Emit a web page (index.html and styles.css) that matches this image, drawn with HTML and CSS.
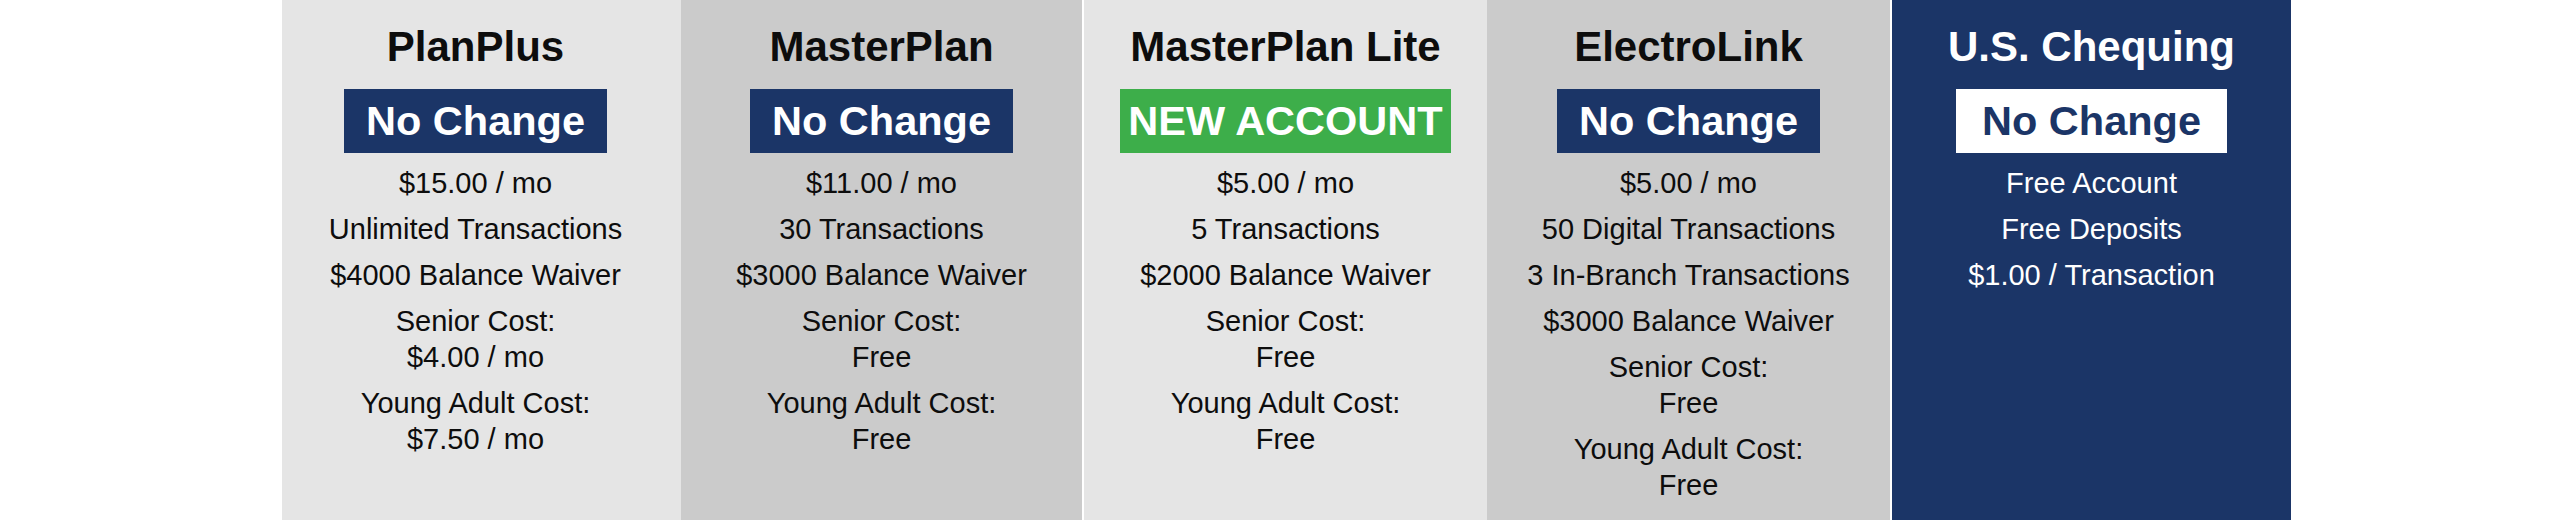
FILE: index.html
```html
<!DOCTYPE html>
<html lang="en">
<head>
<meta charset="utf-8">
<title>Account Plans</title>
<link rel="stylesheet" href="styles.css">
</head>
<body>
<div class="plans">
  <section class="plan plan--light plan--first w399">
    <h2 class="plan__title">PlanPlus</h2>
    <div class="badge badge--navy">No Change</div>
    <ul class="plan__list">
      <li>$15.00 / mo</li>
      <li>Unlimited Transactions</li>
      <li>$4000 Balance Waiver</li>
      <li>Senior Cost:<br>$4.00 / mo</li>
      <li>Young Adult Cost:<br>$7.50 / mo</li>
    </ul>
  </section>
  <section class="plan plan--dark w401">
    <h2 class="plan__title">MasterPlan</h2>
    <div class="badge badge--navy">No Change</div>
    <ul class="plan__list">
      <li>$11.00 / mo</li>
      <li>30 Transactions</li>
      <li>$3000 Balance Waiver</li>
      <li>Senior Cost:<br>Free</li>
      <li>Young Adult Cost:<br>Free</li>
    </ul>
  </section>
  <section class="plan plan--light w403 sep">
    <h2 class="plan__title">MasterPlan Lite</h2>
    <div class="badge badge--green">NEW ACCOUNT</div>
    <ul class="plan__list">
      <li>$5.00 / mo</li>
      <li>5 Transactions</li>
      <li>$2000 Balance Waiver</li>
      <li>Senior Cost:<br>Free</li>
      <li>Young Adult Cost:<br>Free</li>
    </ul>
  </section>
  <section class="plan plan--dark w403">
    <h2 class="plan__title">ElectroLink</h2>
    <div class="badge badge--navy">No Change</div>
    <ul class="plan__list">
      <li>$5.00 / mo</li>
      <li>50 Digital Transactions</li>
      <li>3 In-Branch Transactions</li>
      <li>$3000 Balance Waiver</li>
      <li>Senior Cost:<br>Free</li>
      <li>Young Adult Cost:<br>Free</li>
    </ul>
  </section>
  <section class="plan plan--navy w399 sep">
    <h2 class="plan__title">U.S. Chequing</h2>
    <div class="badge badge--white">No Change</div>
    <ul class="plan__list">
      <li>Free Account</li>
      <li>Free Deposits</li>
      <li>$1.00 / Transaction</li>
    </ul>
  </section>
</div>
</body>
</html>
```
FILE: styles.css
```css
* { box-sizing: border-box; }
html, body { margin: 0; padding: 0; background: #ffffff; }
body {
  font-family: "Liberation Sans", Arial, sans-serif;
  width: 2574px;
  height: 520px;
  overflow: hidden;
}
.plans {
  display: flex;
  align-items: stretch;
  height: 520px;
  padding-left: 282px;
}
.plan {
  display: flex;
  flex-direction: column;
  align-items: center;
  padding-top: 23px;
  color: #0d0d0d;
  text-align: center;
}
.plan--first { padding-right: 12px; }
.w399 { width: 399px; }
.w401 { width: 401px; }
.w403 { width: 403px; }
.sep { margin-left: 2px; }
.plan--light { background: #e5e5e5; }
.plan--dark { background: #cbcbcb; }
.plan--navy { background: #1b3567; color: #ffffff; }
.plan__title {
  margin: 0;
  font-size: 42px;
  font-weight: 700;
  line-height: 48px;
}
.badge {
  margin-top: 18px;
  height: 64px;
  display: flex;
  align-items: center;
  justify-content: center;
  padding: 0 22px;
  font-size: 41.5px;
  font-weight: 700;
  color: #ffffff;
}
.badge--navy { background: #1b3567; }
.badge--green { background: #3dae4a; padding: 0 8px; }
.badge--white { background: #ffffff; color: #1b3567; padding: 0 26px; }
.plan__list {
  list-style: none;
  margin: 12px 0 0;
  padding: 0;
  display: flex;
  flex-direction: column;
  gap: 10px;
  font-size: 29px;
  line-height: 36px;
}
.plan__list li { margin: 0; }
```
